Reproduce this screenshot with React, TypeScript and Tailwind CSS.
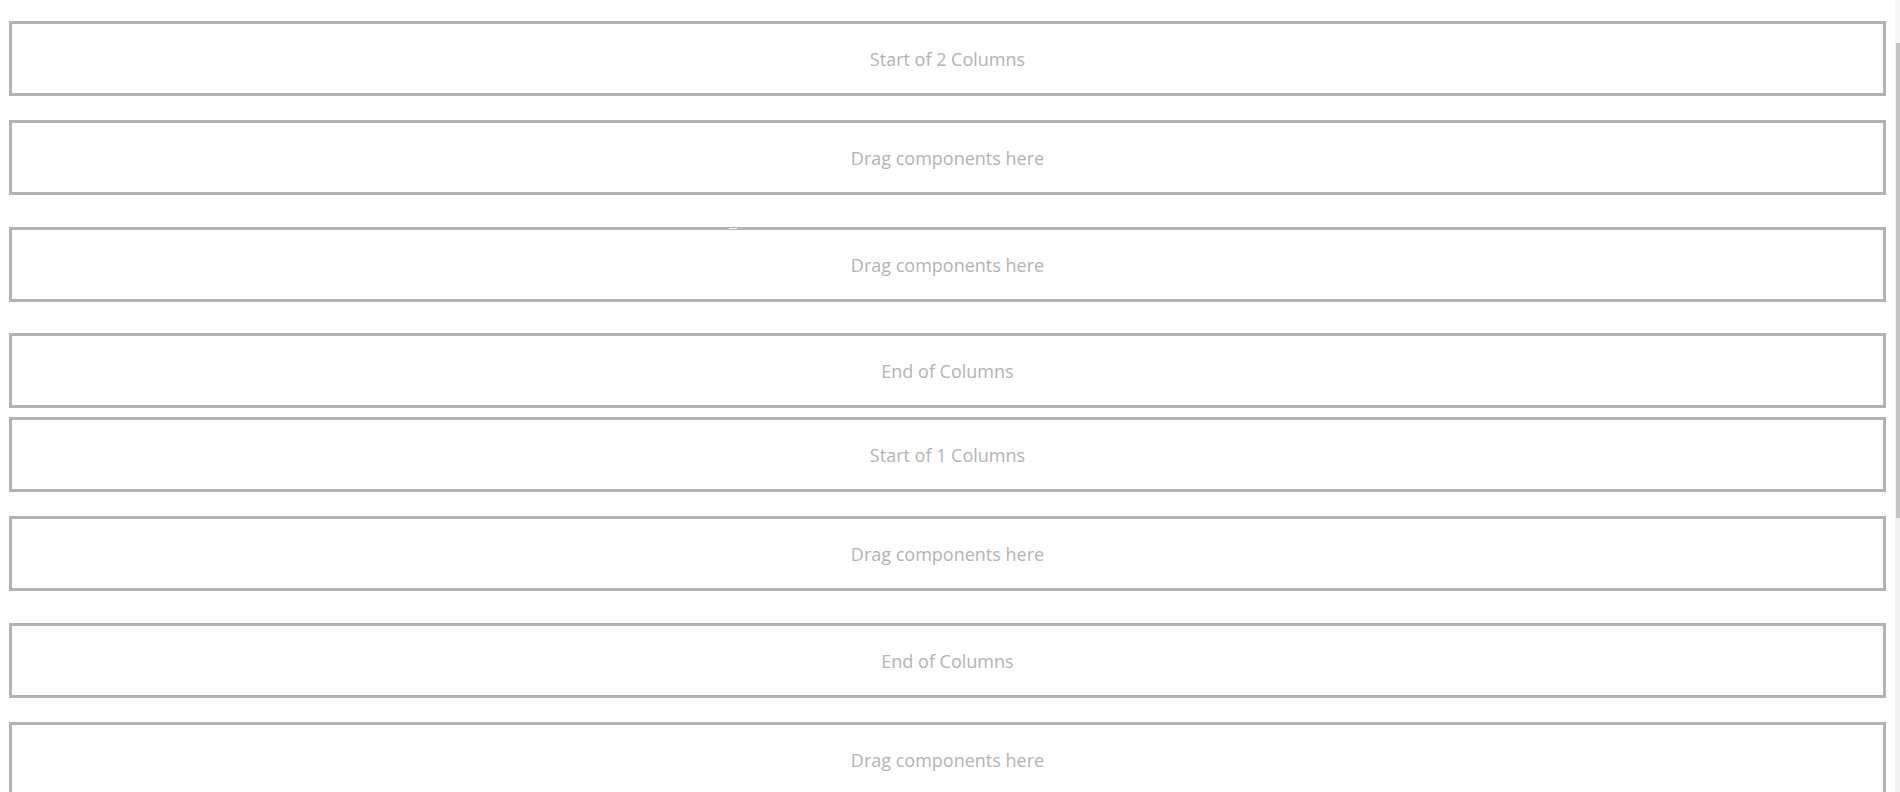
import React from 'react';

type Slot = { label: string; mt: string; mark?: boolean };

const slots: Slot[] = [
  { label: 'Start of 2 Columns', mt: 'mt-[21px]' },
  { label: 'Drag components here', mt: 'mt-[24px]' },
  { label: 'Drag components here', mt: 'mt-[32px]', mark: true },
  { label: 'End of Columns', mt: 'mt-[31px]' },
  { label: 'Start of 1 Columns', mt: 'mt-[9px]' },
  { label: 'Drag components here', mt: 'mt-[24px]' },
  { label: 'End of Columns', mt: 'mt-[32px]' },
  { label: 'Drag components here', mt: 'mt-[24px]' },
];

function Placeholder({ label, mt, mark }: Slot) {
  return (
    <div
      className={`${mt} relative shrink-0 h-[75px] border-[3px] border-[#b3b3b3] bg-white flex items-center justify-center`}
    >
      {mark && <span className="absolute left-[717px] top-[-2px] w-[8px] h-[1px] bg-white" />}
      <span className="text-[18px] text-[#b3b3b3] leading-none pt-[1px]">{label}</span>
    </div>
  );
}

export default function App() {
  return (
    <div
      className="h-[792px] w-[1900px] overflow-hidden flex bg-white"
      style={{ fontFamily: '"Open Sans", Lato, sans-serif' }}
    >
      <main className="flex-1 px-[9px] flex flex-col">
        {slots.map((s, i) => (
          <Placeholder key={i} {...s} />
        ))}
      </main>
      <div className="w-[5px] flex flex-col bg-[#f1f1f1]">
        <div className="h-[43px] shrink-0 bg-[#f6f6f6]" />
        <div className="h-[475px] shrink-0 ml-[1px] bg-[#c4c4c4]" />
      </div>
    </div>
  );
}
